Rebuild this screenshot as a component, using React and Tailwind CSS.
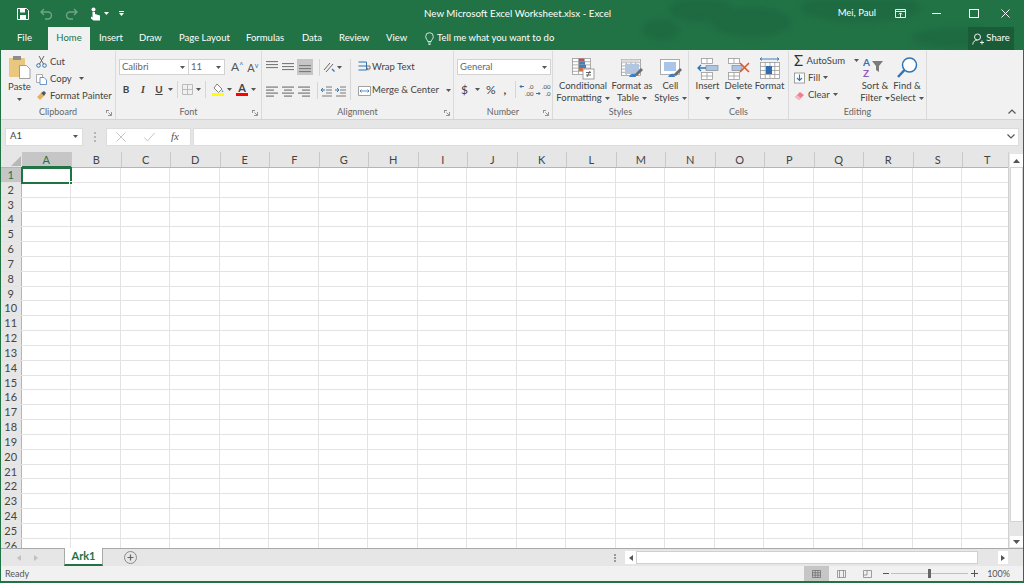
import React from "react";

const COLS = "ABCDEFGHIJKLMNOPQRST".split("");
const ROWS = Array.from({ length: 26 }, (_, i) => i + 1);

const Caret = ({ className = "" }) => (
  <svg width="5" height="3" viewBox="0 0 5 3" className={"shrink-0 " + className}>
    <path d="M0 0h5L2.5 3z" fill="#555" />
  </svg>
);

const Svg = ({ w = 16, h = 16, children, className = "" }) => (
  <svg width={w} height={h} viewBox={`0 0 ${w} ${h}`} className={"shrink-0 " + className}>
    {children}
  </svg>
);

const Sep = () => <div className="w-px h-[17px] bg-[#d6d6d6] shrink-0" />;

const Lines = ({ kind }) => {
  const rows = {
    left: [[1, 12], [1, 8], [1, 12], [1, 8]],
    center: [[1, 12], [3, 8], [1, 12], [3, 8]],
    right: [[1, 12], [5, 8], [1, 12], [5, 8]],
  }[kind];
  return (
    <Svg w={14} h={12}>
      {rows.map(([x, w], i) => (
        <rect key={i} x={x} y={1.5 + i * 3} width={w} height="1.2" fill="#7b7b7b" />
      ))}
    </Svg>
  );
};

const VAlign = ({ pos }) => {
  const base = { top: 1, mid: 3, bot: 5 }[pos];
  return (
    <Svg w={14} h={14}>
      {[0, 1, 2].map((i) => (
        <rect key={i} x="1" y={base + i * 3} width="12" height="1.1" fill="#7b7b7b" />
      ))}
    </Svg>
  );
};

const Group = ({ w, label, launcher, children }) => (
  <div className="flex flex-col h-full border-r border-[#dadada] shrink-0 relative" style={{ width: w }}>
    <div className="flex-1 min-h-0">{children}</div>
    <div className="h-[14px] text-center text-[9px] leading-[13px] text-[#666]">{label}</div>
    {launcher && (
      <svg width="6" height="6" viewBox="0 0 6 6" className="absolute right-[3px] bottom-[3px]">
        <path d="M0 .5h3M.5 0v3M5.5 2v3.5H2M2.5 2.5l3 3" stroke="#8a8a8a" strokeWidth=".9" fill="none" />
      </svg>
    )}
  </div>
);

const Combo = ({ text, className }) => (
  <div className={"h-[16px] bg-white border border-[#d2d2d2] flex items-center justify-between pl-[2px] pr-[3px] text-[9.5px] text-[#666] " + className}>
    <span>{text}</span>
    <Caret />
  </div>
);

const BigButton = ({ icon, lines, caretBelow, w }) => (
  <div className="flex flex-col items-center shrink-0" style={{ width: w }}>
    <div className="h-[24px] flex items-center justify-center">{icon}</div>
    <div className="text-[9.5px] leading-[12px] text-[#444] text-center whitespace-nowrap">
      <div>{lines[0]}</div>
      {caretBelow ? (
        <div className="h-[12px] flex items-center justify-center"><Caret /></div>
      ) : (
        <div className="flex items-center justify-center gap-[3px]">{lines[1]}<Caret /></div>
      )}
    </div>
  </div>
);

const TableGrid = ({ x = 0, y = 0, w = 12, h = 9, c = 3, r = 3, color = "#9a9a9a" }) => (
  <g stroke={color} strokeWidth=".8" fill="none">
    <rect x={x + 0.5} y={y + 0.5} width={w} height={h} fill="#fff" />
    {Array.from({ length: c - 1 }, (_, i) => (
      <path key={i} d={`M${x + 0.5 + ((i + 1) * w) / c} ${y}v${h}`} />
    ))}
    {Array.from({ length: r - 1 }, (_, i) => (
      <path key={i} d={`M${x} ${y + 0.5 + ((i + 1) * h) / r}h${w}`} />
    ))}
  </g>
);

const Brush = ({ x, y }) => (
  <g transform={`translate(${x} ${y})`}>
    <path d="M0 7 L7 0 L9 2 L3 8z" fill="#6d6d6d" />
    <path d="M-5 9c1-3 4-4 6-3l1 3H-5z" fill="#3f7fc1" />
  </g>
);

const ConditionalIcon = () => (
  <Svg w={24} h={23}>
    <TableGrid x={1} y={1} w={18} h={16} c={3} r={5} />
    <rect x="8" y="1.5" width="5" height="3" fill="#c0504d" />
    <rect x="8" y="4.7" width="6" height="3" fill="#4a7ebb" />
    <rect x="8" y="8" width="7" height="3" fill="#4a7ebb" />
    <rect x="8" y="11" width="4" height="3" fill="#dd6b3d" />
    <rect x="12" y="12" width="11" height="10" fill="#fff" stroke="#8a8a8a" strokeWidth=".8" />
    <path d="M15 15.5h5M15 18h5M19 14l-3 6" stroke="#555" strokeWidth=".9" />
  </Svg>
);

const TableIcon = () => (
  <Svg w={24} h={23}>
    <TableGrid x={1} y={2} w={19} h={16} c={4} r={5} />
    <rect x="5" y="7" width="14" height="10" fill="#b3c6e0" />
    <rect x="1.5" y="2.5" width="18" height="3" fill="#dcdcdc" />
    <Brush x={14} y={11} />
  </Svg>
);

const CellStyleIcon = () => (
  <Svg w={24} h={23}>
    <rect x="1.5" y="2.5" width="19" height="15" fill="#fff" stroke="#9a9a9a" strokeWidth=".8" />
    <rect x="5" y="5" width="12" height="9" fill="#a9c6e8" />
    <Brush x={14} y={11} />
  </Svg>
);

const InsertIcon = () => (
  <Svg w={22} h={23}>
    <TableGrid x={4} y={1} w={11} h={5} c={2} r={1} />
    <rect x="9" y="8.5" width="12" height="5" fill="#a9c6e8" stroke="#8a8a8a" strokeWidth=".7" />
    <path d="M1 11h8M4 8l-3 3 3 3" stroke="#2f75b5" strokeWidth="1.3" fill="none" />
    <TableGrid x={4} y={15} w={11} h={7} c={2} r={2} />
  </Svg>
);

const DeleteIcon = () => (
  <Svg w={24} h={23}>
    <TableGrid x={1} y={1} w={11} h={5} c={2} r={1} />
    <rect x="5" y="8.5" width="10" height="5" fill="#a9c6e8" stroke="#8a8a8a" strokeWidth=".7" />
    <TableGrid x={1} y={15} w={11} h={7} c={2} r={2} />
    <path d="M13 6l9 9M22 6l-9 9" stroke="#d9542b" strokeWidth="1.5" />
  </Svg>
);

const FormatIcon = () => (
  <Svg w={24} h={23}>
    <TableGrid x={2} y={5} w={19} h={16} c={4} r={4} />
    <rect x="8" y="9" width="6" height="8" fill="#2f6fb0" />
    <path d="M2 2h19M4 .5L2 2l2 1.5M19 .5L21 2l-2 1.5" stroke="#2f75b5" strokeWidth=".9" fill="none" />
  </Svg>
);

const Tab = ({ children, className = "" }) => (
  <div className={"h-full flex items-center text-[9.5px] text-white whitespace-nowrap " + className}>{children}</div>
);

function TitleBar() {
  return (
    <div className="h-[27px] flex items-center relative text-white shrink-0">
      <svg width="1024" height="50" className="absolute left-0 top-0 blur-[3px]">
        <g fill="#1e6a41">
          <ellipse cx="750" cy="22" rx="40" ry="15" />
          <ellipse cx="700" cy="10" rx="32" ry="12" />
          <ellipse cx="860" cy="8" rx="60" ry="14" />
          <ellipse cx="960" cy="38" rx="50" ry="10" />
          <ellipse cx="660" cy="30" rx="18" ry="10" />
        </g>
      </svg>
      <div className="flex items-center pl-[16px] relative">
        <Svg w={12} h={12}>
          <path d="M.5.5h9l2 2v9H.5z" fill="none" stroke="#fff" />
          <rect x="3" y="1" width="5" height="3.5" fill="#fff" />
          <rect x="3" y="7" width="6" height="4" fill="#fff" />
        </Svg>
        <Svg w={13} h={12} className="ml-[11px]">
          <path d="M4 1L1 4l3 3M1.5 4H8a3.5 3.5 0 0 1 0 7H5" fill="none" stroke="#6fa587" strokeWidth="1.4" />
        </Svg>
        <Caret className="ml-[2px] opacity-30" />
        <Svg w={13} h={12} className="ml-[5px]">
          <path d="M9 1l3 3-3 3M11.5 4H5a3.5 3.5 0 0 0 0 7h3" fill="none" stroke="#6fa587" strokeWidth="1.4" />
        </Svg>
        <Caret className="ml-[2px] opacity-30" />
        <Svg w={11} h={14} className="ml-[5px]">
          <circle cx="3.5" cy="2.5" r="2" fill="#fff" />
          <path d="M2.5 5v5.5L1 9.5v2l2.5 2H10V8.5L5 7V5z" fill="#fff" />
        </Svg>
        <svg width="5" height="3" viewBox="0 0 5 3" className="ml-[3px]"><path d="M0 0h5L2.5 3z" fill="#fff" /></svg>
        <svg width="5" height="5" viewBox="0 0 5 5" className="ml-[10px]"><path d="M0 0h5v1H0zM0 2h5L2.5 5z" fill="#fff" /></svg>
      </div>
      <div className="absolute left-[423px] top-[6px] text-[9.75px] leading-[14px] whitespace-nowrap">New Microsoft Excel Worksheet.xlsx - Excel</div>
      <div className="ml-auto flex items-center relative">
        <span className="text-[9.5px] mr-[19px]">Mei, Paul</span>
        <Svg w={11} h={9}>
          <path d="M.5.5h10v8H.5zM.5 2.5h10" fill="none" stroke="#fff" strokeWidth=".9" />
          <path d="M5.5 8V4M3.8 5.5l1.7-1.7 1.7 1.7" fill="none" stroke="#fff" strokeWidth=".9" />
        </Svg>
        <div className="w-[9px] h-px bg-white ml-[26px]" />
        <div className="w-[10px] h-[9px] border border-white ml-[28px]" />
        <Svg w={9} h={9} className="ml-[22px] mr-[13px]">
          <path d="M.5.5l8 8M8.5.5l-8 8" stroke="#fff" />
        </Svg>
      </div>
    </div>
  );
}

function TabBar() {
  return (
    <div className="h-[23px] flex items-center relative shrink-0">
      <Tab className="ml-[16px] w-[31px]">File</Tab>
      <div className="h-full w-[42px] bg-[#f1f1f1] flex items-center justify-center text-[9.5px] text-[#217346]">Home</div>
      <Tab className="ml-[9px] w-[40px]">Insert</Tab>
      <Tab className="w-[40px]">Draw</Tab>
      <Tab className="w-[67px]">Page Layout</Tab>
      <Tab className="w-[56px]">Formulas</Tab>
      <Tab className="w-[37px]">Data</Tab>
      <Tab className="w-[47px]">Review</Tab>
      <Tab className="w-[39px]">View</Tab>
      <Tab className="text-[#d5e6dc]">
        <Svg w={9} h={13} className="mr-[3px]">
          <path d="M2.8 9.5C2.5 7.5.7 7 .7 4.5a3.8 3.8 0 0 1 7.6 0C8.3 7 6.5 7.5 6.2 9.5zM3 11h3M3.5 12.5h2" fill="none" stroke="#fff" strokeWidth=".8" />
        </Svg>
        Tell me what you want to do
      </Tab>
      <div className="ml-auto mr-[9px] h-full w-[46px] bg-[#1b5c38] flex items-center justify-center gap-[2px] text-[9.5px] text-white relative">
        <Svg w={12} h={12}>
          <circle cx="5.5" cy="4" r="3" fill="none" stroke="#fff" strokeWidth=".9" />
          <path d="M.7 11.5c.5-3 2-4.5 4.8-4.5M8 9.5h4M10 7.5v4" fill="none" stroke="#fff" strokeWidth=".9" />
        </Svg>
        Share
      </div>
    </div>
  );
}

function Ribbon() {
  return (
    <div className="h-[70px] bg-[#f1f1f1] border-b border-[#d4d4d4] flex pt-[1px] text-[#444] relative shrink-0">
      <Group w={115} label="Clipboard" launcher>
        <div className="flex h-full">
          <div className="w-[35px] flex flex-col items-center pl-[2px] shrink-0">
            <Svg w={23} h={24} className="mt-[4px]">
              <rect x="1" y="3" width="16" height="19" rx="1" fill="#eac77f" />
              <rect x="5" y="1" width="8" height="4" fill="#8d8d8d" />
              <path d="M11.5 10.5h7l3.5 3.5v9.5H11.5z" fill="#fff" stroke="#8a8a8a" strokeWidth=".8" />
            </Svg>
            <span className="text-[9.5px] leading-[12px] mt-[2px]">Paste</span>
            <Caret className="mt-[5px]" />
          </div>
          <div className="flex flex-col text-[9.5px] leading-[17px] pt-[2px]">
            <div className="flex items-center gap-[2px]">
              <Svg w={11} h={12}>
                <circle cx="2.5" cy="9.5" r="1.8" fill="none" stroke="#2f75b5" />
                <circle cx="8.5" cy="9.5" r="1.8" fill="none" stroke="#2f75b5" />
                <path d="M3.5 8L8 0M7.5 8L3 0" stroke="#666" />
              </Svg>
              <span className="ml-[1px]">Cut</span>
            </div>
            <div className="flex items-center gap-[2px]">
              <Svg w={11} h={12}>
                <path d="M.5 1.5h6v8h-6z" fill="#fff" stroke="#9a9a9a" strokeWidth=".8" />
                <path d="M4 4.5h4l2.5 2.5v4.5H4z" fill="#fff" stroke="#4a7ebb" strokeWidth=".8" />
              </Svg>
              <span className="ml-[1px]">Copy</span>
              <Caret className="ml-[5px]" />
            </div>
            <div className="flex items-center gap-[2px]">
              <Svg w={11} h={12}>
                <path d="M1 7l4-4 3 3-4 4z" fill="#e6b35c" />
                <path d="M5 3l3-2 2 2-2 3z" fill="#555" />
              </Svg>
              <span className="ml-[1px] whitespace-nowrap">Format Painter</span>
            </div>
          </div>
        </div>
      </Group>

      <Group w={146} label="Font" launcher>
        <div className="pl-[3px] pt-[8px]">
          <div className="flex items-center">
            <Combo text="Calibri" className="w-[70px]" />
            <Combo text="11" className="w-[37px] -ml-px" />
            <span className="ml-[6px] text-[12px] leading-none text-[#555]">A<sup className="text-[#2f75b5] text-[7px]">^</sup></span>
            <span className="ml-[4px] text-[11px] leading-none text-[#555]">A<sup className="text-[#2f75b5] text-[7px]">v</sup></span>
          </div>
          <div className="flex items-center mt-[6px] h-[17px] text-[#444]">
            <span className="w-[14px] text-center text-[10px] font-bold">B</span>
            <span className="w-[14px] ml-[3px] text-center text-[10px] italic font-bold font-['Liberation_Serif',serif]">I</span>
            <span className="w-[14px] ml-[2px] text-center text-[10px] underline font-bold">U</span>
            <Caret className="ml-[2px] mr-[4px]" />
            <Sep />
            <Svg w={11} h={11} className="ml-[4px]">
              <path d="M.5.5h10v10H.5zM5.5.5v10M.5 5.5h10" fill="none" stroke="#bbb" />
            </Svg>
            <Caret className="ml-[3px] mr-[4px]" />
            <Sep />
            <div className="ml-[6px] flex flex-col items-center">
              <Svg w={12} h={10}>
                <path d="M5 1l5 5-3.5 3.5L2 5z" fill="#fff" stroke="#666" strokeWidth=".8" />
                <path d="M10.5 7l1 2h-2z" fill="#5b8ec4" />
              </Svg>
              <div className="w-[12px] h-[3px] bg-[#ffff00]" />
            </div>
            <Caret className="ml-[3px] mr-[4px]" />
            <div className="flex flex-col items-center">
              <span className="text-[11px] leading-[10px] h-[10px] font-bold text-[#444]">A</span>
              <div className="w-[12px] h-[3px] bg-[#ff0000]" />
            </div>
            <Caret className="ml-[3px]" />
          </div>
        </div>
      </Group>

      <Group w={192} label="Alignment" launcher>
        <div className="flex h-full pl-[3px] pt-[8px]">
          <div className="flex flex-col w-[85px]">
            <div className="flex items-center h-[16px] gap-[2px]">
              <VAlign pos="top" />
              <VAlign pos="mid" />
              <div className="w-[16px] h-[16px] bg-[#c6c6c6] flex items-center justify-center"><VAlign pos="bot" /></div>
              <div className="w-[2px]" />
              <Sep />
              <Svg w={12} h={12} className="ml-[1px]">
                <path d="M1 9L7 2M3 11l7-8" stroke="#666" strokeWidth="1" />
                <path d="M9 8l2.5 2.5" stroke="#2f75b5" strokeWidth="1.2" />
              </Svg>
              <Caret />
            </div>
            <div className="flex items-center h-[17px] gap-[2px] mt-[7px]">
              <Lines kind="left" />
              <Lines kind="center" />
              <Lines kind="right" />
              <div className="w-[2px]" />
              <Sep />
              <Svg w={12} h={12} className="ml-[1px]">
                <path d="M5 2h6M5 5h6M5 8h6M1 11h10" stroke="#7b7b7b" />
                <path d="M0 5h4M2 3L0 5l2 2" stroke="#2f75b5" fill="none" />
              </Svg>
              <Svg w={12} h={12}>
                <path d="M5 2h6M5 5h6M5 8h6M1 11h10" stroke="#7b7b7b" />
                <path d="M0 5h4M2 3l2 2-2 2" stroke="#2f75b5" fill="none" />
              </Svg>
            </div>
          </div>
          <div className="w-px h-[41px] bg-[#d6d6d6]" />
          <div className="flex flex-col pl-[7px] text-[9.5px]">
            <div className="flex items-center h-[16px] gap-[1px]">
              <Svg w={13} h={12}>
                <path d="M.5 1h8M.5 5h8M.5 9h8M8.5 1v8" stroke="#2f75b5" fill="none" />
                <path d="M8 5h4v3H9M10 7l-1.5 1 1.5 1.5" stroke="#555" strokeWidth=".8" fill="none" />
              </Svg>
              <span>Wrap Text</span>
            </div>
            <div className="flex items-center h-[17px] gap-[1px] mt-[7px]">
              <Svg w={13} h={12}>
                <path d="M.5 1.5h12v9H.5z" fill="#fff" stroke="#8a8a8a" strokeWidth=".8" />
                <path d="M2 6h9M3.5 4.5L2 6l1.5 1.5M9.5 4.5L11 6 9.5 7.5" stroke="#2f75b5" strokeWidth=".8" fill="none" />
              </Svg>
              <span className="whitespace-nowrap">Merge &amp; Center</span>
              <Caret className="ml-[6px]" />
            </div>
          </div>
        </div>
      </Group>

      <Group w={99} label="Number" launcher>
        <div className="pl-[3px] pt-[8px]">
          <Combo text="General" className="w-[94px]" />
          <div className="flex items-center mt-[6px] h-[17px] text-[#444]">
            <span className="ml-[4px] text-[12px] leading-none">$</span>
            <Caret className="ml-[7px]" />
            <span className="ml-[6px] text-[12px] leading-none">%</span>
            <span className="ml-[8px] text-[12px] font-bold leading-none">,</span>
            <div className="ml-[9px]"><Sep /></div>
            <span className="relative ml-[3px] w-[14px] h-[14px] text-[6px] leading-[7px] text-right block">
              .0
              <br />
              .00
              <svg width="5" height="5" viewBox="0 0 5 5" className="absolute left-0 top-[1px]"><path d="M5 2.5H1M2.5 1L1 2.5 2.5 4" stroke="#2f75b5" fill="none" /></svg>
            </span>
            <span className="relative ml-[3px] w-[14px] h-[14px] text-[6px] leading-[7px] text-right block">
              .00
              <br />
              .0
              <svg width="5" height="5" viewBox="0 0 5 5" className="absolute left-0 bottom-[1px]"><path d="M0 2.5h4M2.5 1L4 2.5 2.5 4" stroke="#2f75b5" fill="none" /></svg>
            </span>
          </div>
        </div>
      </Group>

      <Group w={136} label="Styles">
        <div className="flex pt-[5px] pl-[4px]">
          <BigButton w={52} icon={<ConditionalIcon />} lines={["Conditional", "Formatting"]} />
          <BigButton w={46} icon={<TableIcon />} lines={["Format as", "Table"]} />
          <BigButton w={31} icon={<CellStyleIcon />} lines={["Cell", "Styles"]} />
        </div>
      </Group>

      <Group w={100} label="Cells">
        <div className="flex pt-[5px] pl-[3px]">
          <BigButton w={31} icon={<InsertIcon />} lines={["Insert"]} caretBelow />
          <BigButton w={31} icon={<DeleteIcon />} lines={["Delete"]} caretBelow />
          <BigButton w={31} icon={<FormatIcon />} lines={["Format"]} caretBelow />
        </div>
      </Group>

      <Group w={138} label="Editing">
        <div className="flex h-full">
          <div className="w-[70px] pl-[5px] pt-[1px] text-[9.5px] leading-[17px] flex flex-col shrink-0">
            <div className="flex items-center gap-[3px] whitespace-nowrap">
              <span className="text-[15px] w-[10px] leading-none text-[#333]">Σ</span>
              <span>AutoSum</span>
              <Caret className="ml-[6px]" />
            </div>
            <div className="flex items-center gap-[3px]">
              <Svg w={11} h={12}>
                <rect x=".5" y="1" width="10" height="10" fill="#fff" stroke="#8a8a8a" strokeWidth=".8" />
                <path d="M5.5 2.5v6M3 6l2.5 2.5L8 6" stroke="#2f75b5" strokeWidth="1.1" fill="none" />
              </Svg>
              <span>Fill</span>
              <Caret />
            </div>
            <div className="flex items-center gap-[3px]">
              <Svg w={11} h={12}>
                <path d="M1 8l5-5 4 3-5 5z" fill="#ec7f92" />
                <path d="M1 8l2-2 4 3-2 2z" fill="#f6b8c2" />
              </Svg>
              <span>Clear</span>
              <Caret />
            </div>
          </div>
          <div className="flex pt-[5px]">
            <BigButton w={32} icon={
              <Svg w={24} h={22}>
                <text x="0" y="9" fontSize="10" fontWeight="700" fill="#2f75b5">A</text>
                <text x="0" y="20" fontSize="10" fontWeight="700" fill="#8f5bb5">Z</text>
                <path d="M9 4h11l-4 5v6l-3-2V9z" fill="#7b7b7b" />
              </Svg>
            } lines={["Sort &", "Filter"]} />
            <BigButton w={32} icon={
              <Svg w={24} h={24}>
                <circle cx="14.5" cy="9" r="7" fill="#fff" stroke="#2f75b5" strokeWidth="1.5" />
                <path d="M9.5 14L3 21" stroke="#2f75b5" strokeWidth="2.5" />
              </Svg>
            } lines={["Find &", "Select"]} />
          </div>
        </div>
      </Group>

      <svg width="8" height="5" viewBox="0 0 8 5" className="absolute right-[7px] bottom-[5px]">
        <path d="M.5 4.5L4 1l3.5 3.5" stroke="#555" strokeWidth="1.2" fill="none" />
      </svg>
    </div>
  );
}

function FormulaBar() {
  return (
    <div className="h-[32px] bg-[#e6e6e6] flex items-center pl-[4px] pr-[4px] pt-[1px] shrink-0">
      <div className="w-[78px] h-[18px] bg-white border border-[#dcdcdc] flex items-center justify-between px-[4px] text-[9.5px] text-[#444]">
        <span>A1</span>
        <Caret />
      </div>
      <div className="w-[23px] flex flex-col items-center gap-[2px]">
        <div className="w-[2px] h-[2px] bg-[#b5b5b5]" />
        <div className="w-[2px] h-[2px] bg-[#b5b5b5]" />
        <div className="w-[2px] h-[2px] bg-[#b5b5b5]" />
      </div>
      <div className="w-[85px] h-[18px] bg-white border border-[#dcdcdc] flex items-center pl-[9px]">
        <Svg w={10} h={10}>
          <path d="M.5.5l9 9M9.5.5l-9 9" stroke="#c4c4c4" />
        </Svg>
        <Svg w={11} h={10} className="ml-[18px]">
          <path d="M.5 5.5l3 3.5 7-8" stroke="#c4c4c4" fill="none" />
        </Svg>
        <span className="ml-[16px] text-[11px] italic text-[#555] font-['Liberation_Serif',serif]">fx</span>
      </div>
      <div className="flex-1 h-[18px] ml-[2px] bg-white border border-[#dcdcdc] flex items-center justify-end pr-[3px]">
        <svg width="8" height="5" viewBox="0 0 8 5"><path d="M.5.5L4 4 7.5.5" stroke="#555" strokeWidth="1.2" fill="none" /></svg>
      </div>
    </div>
  );
}

function Sheet() {
  return (
    <div className="flex-1 min-h-0 flex bg-white relative overflow-hidden">
      <div className="flex-1 min-w-0 flex flex-col overflow-hidden">
        <div className="h-[16px] flex shrink-0 bg-[#e6e6e6] border-b border-[#b5b5b5] text-[11px] text-[#444]">
          <div className="w-[20.5px] shrink-0 relative">
            <svg width="10" height="10" viewBox="0 0 10 10" className="absolute right-[1px] bottom-[1px]"><path d="M10 0v10H0z" fill="#b8b8b8" /></svg>
          </div>
          {COLS.map((c, i) => (
            <div
              key={c}
              className={
                i === 0
                  ? "w-[49.5px] shrink-0 text-center leading-[15px] bg-[#c6c6c6] text-[#217346] border-b-2 border-[#217346] h-[16px]"
                  : "w-[49.5px] shrink-0 text-center leading-[15px] border-l border-[#c8c8c8]"
              }
            >
              {c}
            </div>
          ))}
        </div>
        {ROWS.map((r) => (
          <div key={r} className="h-[14.83px] flex shrink-0 border-b border-[#e3e3e3]">
            <div
              className={
                r === 1
                  ? "w-[20.5px] shrink-0 text-center text-[11px] leading-[14px] bg-[#c6c6c6] text-[#217346] border-r border-[#b5b5b5]"
                  : "w-[20.5px] shrink-0 text-center text-[11px] leading-[14px] bg-[#e6e6e6] text-[#444] border-r border-[#b5b5b5]"
              }
            >
              {r}
            </div>
            {COLS.map((c) => (
              <div key={c} className="w-[49.5px] shrink-0 border-r border-[#e3e3e3]" />
            ))}
          </div>
        ))}
        <div className="absolute left-[20px] top-[15px] w-[51px] h-[17px] border-2 border-[#217346]">
          <div className="absolute -right-[3px] -bottom-[3px] w-[4px] h-[4px] bg-[#217346] border border-white" />
        </div>
      </div>
      <div className="w-[15px] shrink-0 bg-[#e6e6e6] flex flex-col items-center pt-[2px] pb-[1px] border-l border-[#d0d0d0]">
        <div className="w-[13px] h-[13px] bg-white flex items-center justify-center">
          <svg width="7" height="4" viewBox="0 0 7 4"><path d="M0 4h7L3.5 0z" fill="#555" /></svg>
        </div>
        <div className="w-[13px] h-[355px] bg-white border border-[#d4d4d4]" />
        <div className="w-[13px] h-[11px] bg-white mt-auto flex items-center justify-center">
          <svg width="7" height="4" viewBox="0 0 7 4"><path d="M0 0h7L3.5 4z" fill="#555" /></svg>
        </div>
      </div>
    </div>
  );
}

function SheetTabs() {
  return (
    <div className="h-[18px] bg-[#e6e6e6] border-t border-[#a8a8a8] flex items-stretch shrink-0">
      <div className="w-[63px] flex items-center pl-[16px] gap-[13px]">
        <svg width="4" height="6" viewBox="0 0 4 6"><path d="M4 0v6L0 3z" fill="#c0c0c0" /></svg>
        <svg width="4" height="6" viewBox="0 0 4 6"><path d="M0 0v6l4-3z" fill="#c0c0c0" /></svg>
      </div>
      <div className="w-[39px] -mt-px bg-white border-l border-r border-[#a8a8a8] border-b-2 border-b-[#217346] flex items-center justify-center text-[11px] font-bold text-[#217346]">Ark1</div>
      <div className="ml-[21px] flex items-center">
        <Svg w={13} h={13}>
          <circle cx="6.5" cy="6.5" r="6" fill="none" stroke="#8a8a8a" />
          <path d="M3.5 6.5h6M6.5 3.5v6" stroke="#666" strokeWidth="1.2" />
        </Svg>
      </div>
      <div className="ml-auto flex items-center">
        <div className="flex flex-col gap-[1px] mr-[9px]">
          <div className="w-[2px] h-[2px] bg-[#999]" />
          <div className="w-[2px] h-[2px] bg-[#999]" />
          <div className="w-[2px] h-[2px] bg-[#999]" />
        </div>
        <div className="w-[11px] h-[13px] bg-white flex items-center justify-center">
          <svg width="4" height="6" viewBox="0 0 4 6"><path d="M4 0v6L0 3z" fill="#555" /></svg>
        </div>
        <div className="w-[342px] h-[13px] bg-white border border-[#d0d0d0]" />
        <div className="w-[20px]" />
        <div className="w-[10px] h-[13px] bg-white flex items-center justify-center">
          <svg width="4" height="6" viewBox="0 0 4 6"><path d="M0 0v6l4-3z" fill="#555" /></svg>
        </div>
        <div className="w-[15px]" />
      </div>
    </div>
  );
}

function StatusBar() {
  return (
    <div className="h-[15px] bg-[#f1f1f1] flex items-center text-[9px] text-[#555] shrink-0">
      <span className="ml-[4px]">Ready</span>
      <div className="ml-auto flex items-center h-full">
        <div className="w-[25px] h-full bg-[#c6c6c6] flex items-center justify-center">
          <Svg w={9} h={8}>
            <path d="M.5.5h8v7h-8zM3.2.5v7M5.9.5v7M.5 2.8h8M.5 5.2h8" fill="none" stroke="#666" strokeWidth=".7" />
          </Svg>
        </div>
        <Svg w={9} h={8} className="ml-[8px]">
          <path d="M.5.5h8v7h-8zM2.5.5v7M6.5.5v7" fill="none" stroke="#888" strokeWidth=".8" />
        </Svg>
        <Svg w={9} h={8} className="ml-[17px]">
          <path d="M.5.5h8v7h-8zM.5 5h3.5V.5" fill="none" stroke="#888" strokeWidth=".8" />
        </Svg>
        <div className="w-[6px] h-px bg-[#555] ml-[11px]" />
        <div className="w-[77px] h-px bg-[#c0c0c0] ml-[2px] mr-[3px] flex items-center">
          <div className="w-[3px] h-[9px] bg-[#666] ml-[37px] shrink-0" />
        </div>
        <Svg w={7} h={7}>
          <path d="M0 3.5h7M3.5 0v7" stroke="#555" />
        </Svg>
        <span className="ml-[9px] mr-[13px]">100%</span>
      </div>
    </div>
  );
}

export default function App() {
  return (
    <div className="w-[1024px] h-[583px] bg-[#217346] flex flex-col overflow-hidden border-x border-[#217346] border-b-2 font-['Lato','Noto_Sans',sans-serif]">
      <TitleBar />
      <TabBar />
      <Ribbon />
      <FormulaBar />
      <Sheet />
      <SheetTabs />
      <StatusBar />
    </div>
  );
}
